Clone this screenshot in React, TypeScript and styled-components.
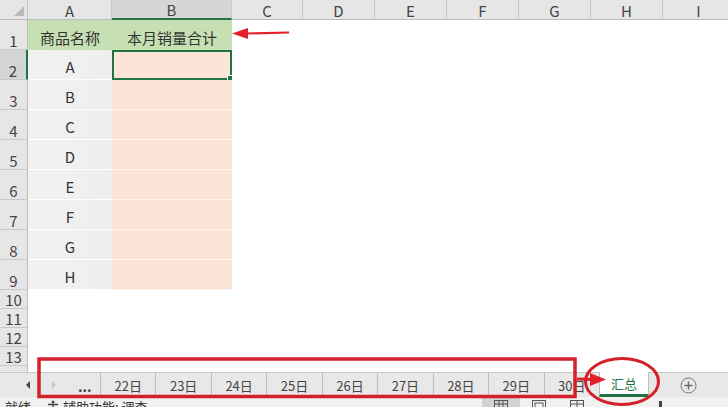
import React from "react";
import styled, { createGlobalStyle, css } from "styled-components";

const GlobalStyle = createGlobalStyle`
  html, body {
    margin: 0;
    padding: 0;
    background: #ffffff;
  }
  body {
    font-family: "Noto Sans CJK SC", "Liberation Sans", sans-serif;
  }
`;

const COLS = ["A", "B", "C", "D", "E", "F", "G", "H", "I"];
const NAMES = ["A", "B", "C", "D", "E", "F", "G", "H"];
const DAYS = ["22日", "23日", "24日", "25日", "26日", "27日", "28日", "29日", "30日"];

type CellKind = "title" | "name" | "value" | "empty";

const Page = styled.div`
  position: relative;
  width: 728px;
  height: 407px;
  display: flex;
  flex-direction: column;
  overflow: hidden;
  background: #fff;
`;

const Sheet = styled.div`
  flex: 1;
  min-height: 0;
  overflow: hidden;
  display: grid;
  grid-template-columns: 28px 84px 120px 71px repeat(6, 72px);
  grid-template-rows: 20px repeat(9, 30px) repeat(5, 19px);
`;

const Corner = styled.div`
  position: relative;
  background: #e6e6e6;
  border-right: 1px solid #c4c4c4;
  border-bottom: 1px solid #bdbdbd;
  box-sizing: border-box;

  &::after {
    content: "";
    position: absolute;
    right: 3px;
    bottom: 3px;
    border-style: solid;
    border-width: 0 0 10px 10px;
    border-color: transparent transparent #b9b9b9 transparent;
  }
`;

const ColHead = styled.div<{ $active?: boolean }>`
  display: flex;
  align-items: center;
  justify-content: center;
  box-sizing: border-box;
  background: ${(p) => (p.$active ? "#d6d6d6" : "#e6e6e6")};
  border-right: 1px solid #c8c8c8;
  border-bottom: ${(p) => (p.$active ? "2px solid #217346" : "1px solid #bdbdbd")};
  color: #444;
  font-size: 15px;
  line-height: 1;
  padding-top: 1px;
`;

const RowHead = styled.div<{ $active?: boolean }>`
  display: flex;
  align-items: flex-end;
  justify-content: center;
  box-sizing: border-box;
  background: ${(p) => (p.$active ? "#d4d4d4" : "#e6e6e6")};
  border-bottom: 1px solid #c8c8c8;
  border-right: ${(p) => (p.$active ? "2px solid #217346" : "1px solid #bdbdbd")};
  color: #444;
  font-size: 15px;
  line-height: 1;
  padding-bottom: 1px;
`;

const kindStyles: Record<CellKind, ReturnType<typeof css>> = {
  title: css`
    background: #c6e0b4;
  `,
  name: css`
    background: linear-gradient(90deg, #f2f2f2, #eeeeee);
    border-bottom: 1px solid #ffffff;
  `,
  value: css`
    background: #fce4d6;
    border-bottom: 1px solid #fff4ee;
  `,
  empty: css`
    background: #ffffff;
  `,
};

const Cell = styled.div<{ $kind: CellKind; $selected?: boolean }>`
  position: relative;
  display: flex;
  align-items: center;
  justify-content: center;
  box-sizing: border-box;
  color: #333;
  font-size: 15px;
  line-height: 1;
  padding-top: 4px;
  ${(p) => kindStyles[p.$kind]}

  ${(p) =>
    p.$selected &&
    css`
      border: 2px solid #217346;

      &::after {
        content: "";
        position: absolute;
        right: -4px;
        bottom: -4px;
        width: 5px;
        height: 5px;
        background: #217346;
        border: 1px solid #fff;
      }
    `}
`;

const TabBar = styled.div`
  height: 25px;
  flex: none;
  display: flex;
  align-items: stretch;
  background: #e8e8e8;
  border-top: 1px solid #c6c6c6;
  box-sizing: border-box;
`;

const NavArea = styled.div`
  width: 100px;
  display: flex;
  align-items: center;
  box-sizing: border-box;
  padding-left: 26px;
  gap: 22px;
`;

const NavArrow = styled.span<{ $dir: "left" | "right"; $dim?: boolean }>`
  width: 0;
  height: 0;
  border-top: 4px solid transparent;
  border-bottom: 4px solid transparent;
  ${(p) =>
    p.$dir === "left"
      ? css`
          border-right: 4px solid ${p.$dim ? "#c8c8c8" : "#444"};
        `
      : css`
          border-left: 4px solid ${p.$dim ? "#c8c8c8" : "#444"};
        `}
`;

const Ellipsis = styled.span`
  font-size: 14px;
  font-weight: 700;
  color: #444;
  margin-top: 2px;
`;

const Tab = styled.div<{ $active?: boolean }>`
  display: flex;
  align-items: center;
  box-sizing: border-box;
  border-left: 1px solid #bdbdbd;
  font-size: 13px;
  color: #444;
  padding: 0 13.5px;
  white-space: nowrap;

  ${(p) =>
    p.$active &&
    css`
      background: #ffffff;
      color: #217346;
      padding: 1px 11px 0;
      margin-top: -1px;
      border-right: 1px solid #bdbdbd;
      border-bottom: 3px solid #217346;
    `}
`;

const AddButton = styled.div`
  margin-left: 31px;
  display: flex;
  align-items: center;
`;

const StatusBar = styled.div`
  height: 10px;
  flex: none;
  display: flex;
  align-items: flex-start;
  background: #f1f1f1;
  overflow: hidden;
  font-size: 13px;
  line-height: 14px;
  color: #333;
`;

const StatusText = styled.span<{ $gap?: number }>`
  display: flex;
  align-items: flex-start;
  gap: 4px;
  margin-left: ${(p) => p.$gap ?? 0}px;
  margin-top: 3px;
  white-space: nowrap;
`;

const ViewGroup = styled.div`
  margin-left: auto;
  display: flex;
`;

const ViewButton = styled.div<{ $on?: boolean }>`
  width: 38px;
  height: 10px;
  display: flex;
  justify-content: center;
  padding-top: 3px;
  box-sizing: border-box;
  background: ${(p) => (p.$on ? "#d3d3d3" : "transparent")};
`;

const ZoomSlider = styled.div`
  width: 132px;
  height: 10px;
  display: flex;
  align-items: flex-end;
  padding-left: 63px;
  box-sizing: border-box;
`;

const ZoomThumb = styled.span`
  width: 3px;
  height: 6px;
  background: #444;
`;

const Overlay = styled.svg`
  position: absolute;
  inset: 0;
  pointer-events: none;
`;

function cellKind(row: number, col: number): CellKind {
  if (row === 1 && col <= 1) return "title";
  if (row >= 2 && row <= 9 && col === 0) return "name";
  if (row >= 2 && row <= 9 && col === 1) return "value";
  return "empty";
}

function cellText(row: number, col: number): string {
  if (row === 1 && col === 0) return "商品名称";
  if (row === 1 && col === 1) return "本月销量合计";
  if (row >= 2 && row <= 9 && col === 0) return NAMES[row - 2];
  return "";
}

const ViewIcon = ({ kind }: { kind: "normal" | "layout" | "break" }) => (
  <svg width="16" height="12" viewBox="0 0 16 12">
    <rect x="1.5" y="0.5" width="13" height="11" fill="none" stroke="#555" strokeWidth="1" />
    {kind === "normal" && (
      <>
        <line x1="6" y1="0.5" x2="6" y2="11" stroke="#555" />
        <line x1="10" y1="0.5" x2="10" y2="11" stroke="#555" />
        <line x1="1.5" y1="4" x2="14.5" y2="4" stroke="#555" />
      </>
    )}
    {kind === "layout" && <rect x="4" y="3" width="8" height="8" fill="none" stroke="#555" />}
    {kind === "break" && (
      <>
        <line x1="8" y1="0.5" x2="8" y2="11" stroke="#555" />
        <line x1="1.5" y1="4" x2="14.5" y2="4" stroke="#555" />
      </>
    )}
  </svg>
);

const AccessIcon = () => (
  <svg width="12" height="14" viewBox="0 0 12 14">
    <circle cx="6" cy="2" r="1.5" fill="#444" />
    <path d="M1 4.5 L11 4.5 M6 4.5 L6 9 M6 9 L3 13 M6 9 L9 13" stroke="#444" strokeWidth="1.3" fill="none" />
  </svg>
);

export default function App() {
  const rows = Array.from({ length: 14 }, (_, i) => i + 1);

  return (
    <>
      <GlobalStyle />
      <Page>
        <Sheet>
          <Corner />
          {COLS.map((c) => (
            <ColHead key={c} $active={c === "B"}>
              {c}
            </ColHead>
          ))}
          {rows.map((r) => (
            <React.Fragment key={r}>
              <RowHead $active={r === 2}>{r <= 13 ? r : ""}</RowHead>
              {COLS.map((c, ci) => (
                <Cell key={c} $kind={cellKind(r, ci)} $selected={r === 2 && ci === 1}>
                  {cellText(r, ci)}
                </Cell>
              ))}
            </React.Fragment>
          ))}
        </Sheet>

        <TabBar>
          <NavArea>
            <NavArrow $dir="left" />
            <NavArrow $dir="right" $dim />
            <Ellipsis>...</Ellipsis>
          </NavArea>
          {DAYS.map((d) => (
            <Tab key={d}>{d}</Tab>
          ))}
          <Tab $active>汇总</Tab>
          <AddButton>
            <svg width="17" height="17" viewBox="0 0 17 17">
              <circle cx="8.5" cy="8.5" r="7.5" fill="none" stroke="#777" strokeWidth="1" />
              <line x1="8.5" y1="4.5" x2="8.5" y2="12.5" stroke="#666" strokeWidth="1.4" />
              <line x1="4.5" y1="8.5" x2="12.5" y2="8.5" stroke="#666" strokeWidth="1.4" />
            </svg>
          </AddButton>
        </TabBar>

        <StatusBar>
          <StatusText $gap={5}>就绪</StatusText>
          <StatusText $gap={16}>
            <AccessIcon />
            辅助功能: 调查
          </StatusText>
          <ViewGroup>
            <ViewButton $on>
              <ViewIcon kind="normal" />
            </ViewButton>
            <ViewButton>
              <ViewIcon kind="layout" />
            </ViewButton>
            <ViewButton>
              <ViewIcon kind="break" />
            </ViewButton>
          </ViewGroup>
          <ZoomSlider>
            <ZoomThumb />
          </ZoomSlider>
        </StatusBar>

        <Overlay width="728" height="407" viewBox="0 0 728 407">
          {/* arrow pointing at 本月销量合计 */}
          <line x1="289" y1="32.5" x2="244" y2="33.5" stroke="#e3202a" strokeWidth="2.2" />
          <polygon points="232,33.5 248,28 248,39" fill="#e3202a" />
          {/* box round the day tabs */}
          <rect x="39" y="359" width="536" height="37.5" fill="none" stroke="#d4202a" strokeWidth="3.5" />
          {/* arrow to 汇总 */}
          <line x1="577" y1="379" x2="593" y2="379.5" stroke="#e3202a" strokeWidth="3" />
          <polygon points="606,379.5 590,373 590,386" fill="#e3202a" />
          {/* ring round 汇总 */}
          <ellipse cx="622" cy="381.5" rx="36.5" ry="23" fill="none" stroke="#d4202a" strokeWidth="3" />
        </Overlay>
      </Page>
    </>
  );
}
